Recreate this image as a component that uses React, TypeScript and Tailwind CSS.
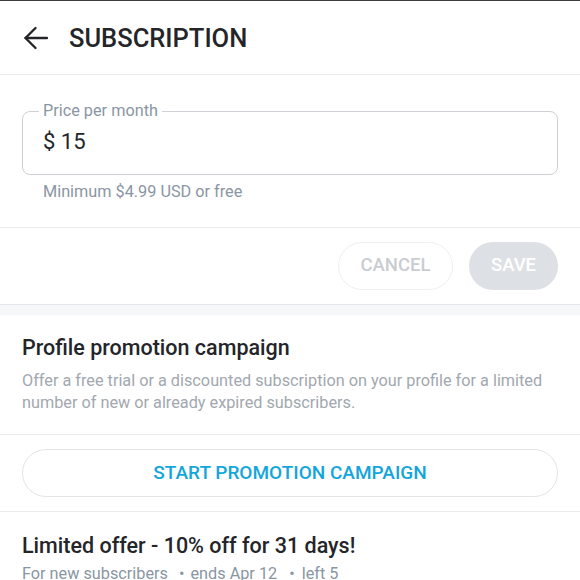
import React from 'react';

const font = { fontFamily: 'Roboto, "Liberation Sans", sans-serif' };

const BackArrow = () => (
  <svg width="24" height="24" viewBox="0 0 24 24" fill="none" stroke="#242529" strokeWidth="2.3" strokeLinecap="round" strokeLinejoin="round">
    <path d="M1.5 12H23" />
    <path d="M11.5 2L1.5 12L11.5 22" />
  </svg>
);

export default function App() {
  return (
    <div className="w-[580px] h-[580px] overflow-hidden bg-white text-[#242529]" style={font}>
      {/* top edge */}
      <div className="h-px bg-[#3a3a3a]" />

      {/* Header */}
      <div className="h-[74px] flex items-center pl-6 border-b border-[#ebebeb]">
        <BackArrow />
        <h1 className="ml-[21px] text-[25.5px] font-medium leading-7">SUBSCRIPTION</h1>
      </div>

      {/* Price */}
      <div className="px-[22px] pt-[26px] pb-[25px] border-b border-[#e9e9ee]">
        <fieldset className="border border-[#cdd1d6] rounded-lg pl-4 pr-4 pt-[7px] pb-[18px]">
          <legend className="px-1 text-[16.25px] leading-5 text-[#8a96a3]">Price per month</legend>
          <div className="pl-1 text-[22px] leading-7">$ 15</div>
        </fieldset>
        <p className="mt-[7px] pl-[21px] text-[16.25px] leading-5 text-[#8a96a3]">Minimum $4.99 USD or free</p>
      </div>

      {/* Actions */}
      <div className="flex justify-end gap-4 px-[22px] py-[14px] border-b border-[#e4e5ec]">
        <button className="h-12 w-[115px] rounded-full border border-[#efefef] text-[18.5px] font-medium text-[#c9cdd2]">CANCEL</button>
        <button className="h-12 w-[89px] rounded-full bg-[#dde0e4] text-[18.5px] font-medium text-white">SAVE</button>
      </div>
      <div className="h-[10px] bg-[#f6f7f9]" />

      {/* Promotion */}
      <div className="px-[22px] pt-[19px] pb-5 border-b border-[#ebebeb]">
        <h2 className="text-[21.5px] font-medium leading-7">Profile promotion campaign</h2>
        <p className="mt-2 text-[16.25px] leading-[22px] text-[#a2a8af]">
          Offer a free trial or a discounted subscription on your profile for a limited number of new or already expired subscribers.
        </p>
      </div>

      <div className="px-[22px] py-[14px] border-b border-[#ebebeb]">
        <button className="w-full h-12 rounded-full border border-[#e3e4e6] text-[19px] font-medium text-[#12a6dc]">
          START PROMOTION CAMPAIGN
        </button>
      </div>

      {/* Offer */}
      <div className="px-[22px] pt-5">
        <h3 className="text-[21.5px] font-medium leading-7">Limited offer - 10% off for 31 days!</h3>
        <p className="mt-1 text-[16.25px] leading-5 text-[#8a96a3]">
          For new subscribers <span className="ml-[7px] mr-[2px]">•</span> ends Apr 12 <span className="ml-[8px] mr-[3px]">•</span> left 5
        </p>
      </div>
    </div>
  );
}
